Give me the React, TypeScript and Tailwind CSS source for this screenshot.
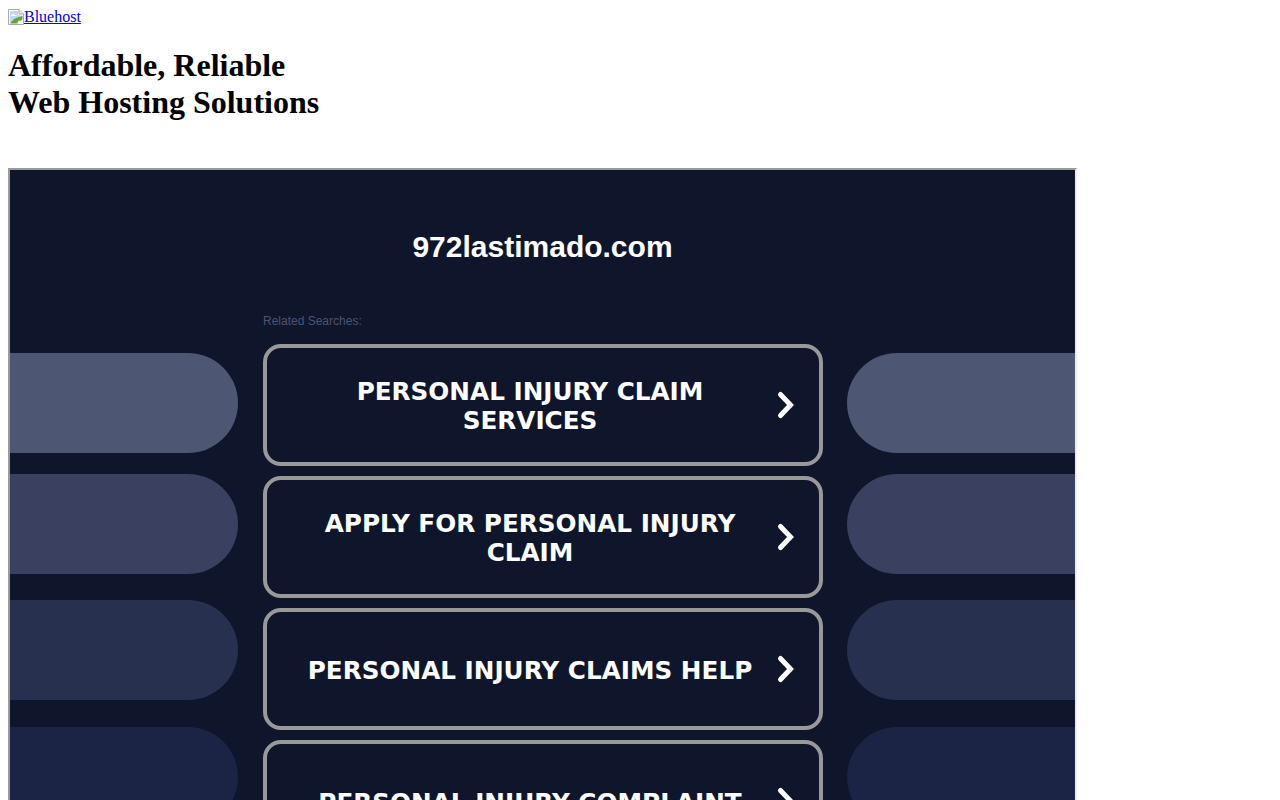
// App.tsx
// Parked-domain page: hosting banner on top, the "framed" search listing under it.

const searches = [
  ['PERSONAL INJURY CLAIM SERVICES', 'Personal injury claim services'],
  ['APPLY FOR PERSONAL INJURY CLAIM', 'Apply for personal injury claim'],
  ['PERSONAL INJURY CLAIMS HELP', 'Personal injury claims help'],
  ['PERSONAL INJURY COMPLAINT', 'Personal injury complaint'],
]

const pills = [
  'h-[100px] shrink-0 bg-[#4d5672]',
  'mt-[21px] h-[100px] shrink-0 bg-[#3a4160]',
  'mt-[26px] h-[100px] shrink-0 bg-[#27304f]',
  'mt-[27px] h-[100px] shrink-0 bg-[#1b2444]',
]

// Browser's broken image placeholder
function BrokenImage() {
  return (
    <svg viewBox="0 0 16 16" className="inline h-4 w-4 align-[-3px]">
      <path d="M0.5 0.5H11L15.5 5V15.5H0.5Z" fill="#fff" stroke="#a8a8a8" />
      <path d="M11 0.5V5H15.5" fill="#e8e8e8" stroke="#a8a8a8" />
      <path d="M2 2H10V5.5L11 6.5H14V9L8 12L2 14Z" fill="#c4d6f5" />
      <path d="M3.5 6C4.5 4.8 6 4.8 7 6H8.5V7H3Z" fill="#fff" />
      <path d="M2 14.5L6 10L9.5 8.5L14.5 7V10L10 14.5Z" fill="#5fa53b" />
      <path d="M11 11L14.5 14.5H9Z" fill="#fff" />
    </svg>
  )
}

function Chevron() {
  return (
    <svg viewBox="0 0 24 32" className="h-8 w-6 shrink-0" fill="none">
      <path d="M7.5 5.5L17.5 16L7.5 26.5" stroke="#fff" strokeWidth="5" strokeLinecap="round" strokeLinejoin="miter" />
    </svg>
  )
}

export default function App() {
  return (
    <div className="h-screen overflow-hidden bg-white p-2 font-['Liberation_Serif',serif] text-black">
      <div className="h-[18px] text-base leading-[18px]">
        <a href="#" className="text-[#0000ee] underline">
          <BrokenImage />Bluehost
        </a>
      </div>

      <h1 className="mt-[21px] text-[32px] font-bold leading-[37px]">
        Affordable, Reliable
        <br />
        Web Hosting Solutions
      </h1>

      {/* iframe with inset border */}
      <div className="mt-[47px] h-[720px] w-[1069px] overflow-hidden border-2 border-t-[#9a9a9a] border-r-[#eeeeee] border-b-[#eeeeee] border-l-[#9a9a9a] bg-[#0f162b] font-['Liberation_Sans',sans-serif]">
        <div className="pt-[59px] text-center text-[30px] font-bold leading-[36px] text-white">
          972lastimado.com
        </div>

        <div className="mt-[49px] flex">
          <div className="flex w-[228px] shrink-0 flex-col pt-[39px]">
            {pills.map(cls => (
              <div key={cls} className={`${cls} rounded-r-[50px]`} />
            ))}
          </div>

          <div className="ml-[25px] w-[560px] shrink-0">
            <div className="h-[30px] text-xs leading-[14px] text-[#4b5373]">Related Searches:</div>
            <div className="flex flex-col gap-[10px]">
              {searches.map(([label, title]) => (
                <a
                  key={label}
                  href="#"
                  title={title}
                  className="flex h-[122px] shrink-0 items-center rounded-[18px] border-4 border-[#999999] pl-[24px] font-['DejaVu_Sans',sans-serif] text-[24.7px] font-bold leading-[29px] text-white"
                >
                  <span className="w-[478px] shrink-0 pt-[2px] text-center">{label}</span>
                  <span className="ml-[4px]"><Chevron /></span>
                </a>
              ))}
            </div>
          </div>

          <div className="ml-[24px] flex w-[228px] shrink-0 flex-col pt-[39px]">
            {pills.map(cls => (
              <div key={cls} className={`${cls} rounded-l-[50px]`} />
            ))}
          </div>
        </div>
      </div>
    </div>
  )
}
